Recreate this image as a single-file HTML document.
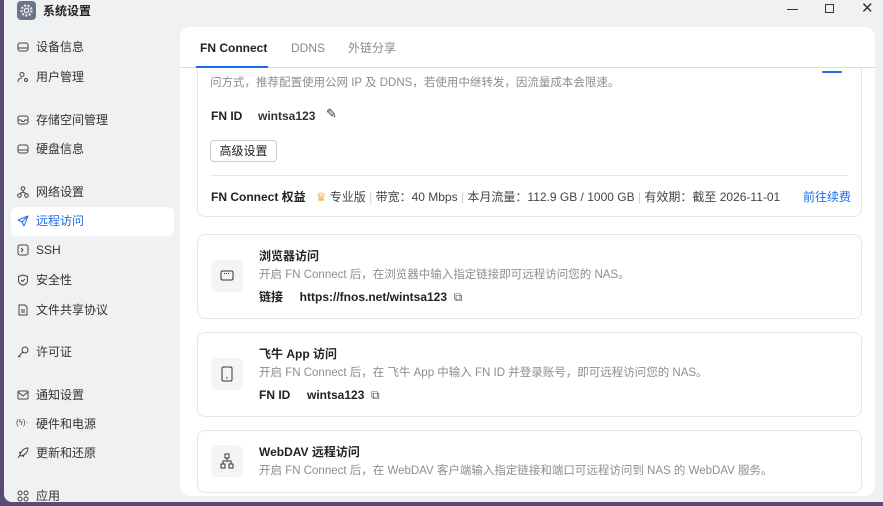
<!DOCTYPE html>
<html><head><meta charset="utf-8"><style>
*{margin:0;padding:0;box-sizing:border-box}
body{width:883px;height:506px;overflow:hidden;background:#5a4a78;font-family:"Liberation Sans","Noto Sans CJK SC",sans-serif;color:#222;position:relative}
.win{position:absolute;left:4px;top:0;width:879px;height:502px;background:#f0f1f3;border-bottom-left-radius:8px}
.abs{position:absolute;white-space:nowrap}
.nav{position:absolute;left:36px;font-size:12px;color:#333;line-height:14px}
.ni{position:absolute;left:17px;width:12px;height:12px}
.panel{position:absolute;left:180px;top:27px;width:695px;height:469px;background:#fff;border-radius:10px;overflow:hidden}
.scroll{position:absolute;left:0;top:41px;width:695px;height:428px;overflow:hidden}
.card{position:absolute;left:17px;width:665px;border:1px solid #e6e7ea;border-radius:8px;background:#fff}
.t{font-size:12px;line-height:14px}
.d{font-size:11.5px;color:#8a8d93;line-height:14px}
.b{font-weight:bold;color:#222}
.ib{position:absolute;left:13px;width:32px;height:32px;background:#f3f4f6;border-radius:6px}
</style></head><body>
<div class="win">
<div class="abs" style="left:13px;top:1px;width:19px;height:19px;background:#6c7588;border-radius:4px"><svg width="19" height="19" viewBox="0 0 19 19"><circle cx="9.5" cy="9.5" r="5" fill="none" stroke="#e8eaf0" stroke-width="2.2" stroke-dasharray="2 1.5"/><circle cx="9.5" cy="9.5" r="2.2" fill="none" stroke="#e8eaf0" stroke-width="1.4"/></svg></div>
<div class="abs" style="left:39px;top:2px;font-size:12px;font-weight:bold">系统设置</div>
<div class="abs" style="left:783px;top:9px;width:11px;height:1px;background:#333"></div>
<div class="abs" style="left:821px;top:4px;width:9px;height:9px;border:1.2px solid #333"></div>
<div class="abs" style="left:857px;top:-1px;font-size:15px;color:#333">✕</div>
</div>
<div class="abs" style="left:11px;top:207px;width:163px;height:29px;background:#fff;border-radius:6px"></div>
<svg class="ni" style="top:41px" viewBox="0 0 12 12"><rect x="1" y="2" width="10" height="8" rx="2" fill="none" stroke="#444"/><line x1="1" y1="7" x2="11" y2="7" stroke="#444"/></svg><div class="nav" style="top:40px">设备信息</div>
<svg class="ni" style="top:71px" viewBox="0 0 12 12"><circle cx="5" cy="3.5" r="2" fill="none" stroke="#444"/><path d="M1 11c0-3 2-4 4-4" fill="none" stroke="#444"/><circle cx="9" cy="9" r="1.5" fill="none" stroke="#444"/></svg><div class="nav" style="top:70px">用户管理</div>
<svg class="ni" style="top:114px" viewBox="0 0 12 12"><rect x="1" y="2" width="10" height="8" rx="2" fill="none" stroke="#444"/><path d="M1 6h3l1 1.5h2L8 6h3" fill="none" stroke="#444"/></svg><div class="nav" style="top:113px">存储空间管理</div>
<svg class="ni" style="top:143px" viewBox="0 0 12 12"><rect x="1" y="2" width="10" height="8" rx="2" fill="none" stroke="#444"/><line x1="1" y1="7" x2="11" y2="7" stroke="#444"/></svg><div class="nav" style="top:142px">硬盘信息</div>
<svg class="ni" style="top:186px" viewBox="0 0 12 12"><circle cx="6" cy="2.5" r="1.8" fill="none" stroke="#444"/><circle cx="2.5" cy="9.5" r="1.8" fill="none" stroke="#444"/><circle cx="9.5" cy="9.5" r="1.8" fill="none" stroke="#444"/><path d="M6 4.5v2M3 7.5L6 6l3 1.5" fill="none" stroke="#444"/></svg><div class="nav" style="top:185px">网络设置</div>
<svg class="ni" style="top:215px" viewBox="0 0 12 12"><path d="M11 1L1 5l4 2 2 4z M5 7l6-6" fill="none" stroke="#1a6cf0" stroke-linejoin="round"/></svg><div class="nav" style="top:214px;color:#1a6cf0">远程访问</div>
<svg class="ni" style="top:244px" viewBox="0 0 12 12"><rect x="1" y="1" width="10" height="10" rx="2" fill="none" stroke="#444"/><path d="M4 4l2 2-2 2" fill="none" stroke="#444"/></svg><div class="nav" style="top:243px">SSH</div>
<svg class="ni" style="top:274px" viewBox="0 0 12 12"><path d="M6 1l4.5 1.5v4c0 2.5-2 4-4.5 4.5C3.5 10.5 1.5 9 1.5 6.5v-4z M4 6l1.5 1.5L8 5" fill="none" stroke="#444"/></svg><div class="nav" style="top:273px">安全性</div>
<svg class="ni" style="top:304px" viewBox="0 0 12 12"><path d="M2 1h6l2 2v8H2z M4 6h4M4 8h4" fill="none" stroke="#444"/></svg><div class="nav" style="top:303px">文件共享协议</div>
<svg class="ni" style="top:346px" viewBox="0 0 12 12"><circle cx="8" cy="4" r="3" fill="none" stroke="#444"/><path d="M6 6l-5 5M2 10l1.5 1" fill="none" stroke="#444"/></svg><div class="nav" style="top:345px">许可证</div>
<svg class="ni" style="top:389px" viewBox="0 0 12 12"><rect x="1" y="2" width="10" height="8" rx="1" fill="none" stroke="#444"/><path d="M1 3l5 4 5-4" fill="none" stroke="#444"/></svg><div class="nav" style="top:388px">通知设置</div>
<div class="abs" style="left:16px;top:418px;font-size:8px;color:#444">(ϟ)·</div><div class="nav" style="top:417px">硬件和电源</div>
<svg class="ni" style="top:447px" viewBox="0 0 12 12"><path d="M11 1C7 1 4 4 3 8l1 1c4-1 7-4 7-8z M3 8l-2 3M2 6l2-1M6 10l1-2" fill="none" stroke="#444"/></svg><div class="nav" style="top:446px">更新和还原</div>
<svg class="ni" style="top:490px" viewBox="0 0 12 12"><circle cx="3" cy="3" r="2" fill="none" stroke="#444"/><circle cx="9" cy="3" r="2" fill="none" stroke="#444"/><circle cx="3" cy="9" r="2" fill="none" stroke="#444"/><circle cx="9" cy="9" r="2" fill="none" stroke="#444"/></svg><div class="nav" style="top:489px">应用</div>

<div class="panel">
<div class="abs t b" style="left:20px;top:14px">FN Connect</div>
<div class="abs t" style="left:111px;top:14px;color:#888">DDNS</div>
<div class="abs t" style="left:168px;top:14px;color:#888">外链分享</div>
<div class="abs" style="left:0;top:40px;width:695px;height:1px;background:#ddd"></div>
<div class="abs" style="left:16px;top:39px;width:72px;height:2px;background:#1a6cf0"></div>

<div class="scroll">
<div class="card" style="top:-22px;height:171px">
<div class="abs" style="left:624px;top:24px;width:20px;height:2px;background:#1a6cf0;border-radius:1px"></div>
<div class="abs d" style="left:12px;top:29px">问方式，推荐配置使用公网 IP 及 DDNS，若使用中继转发，因流量成本会限速。</div>
<div class="abs t b" style="left:13px;top:62px">FN ID</div>
<div class="abs t b" style="left:60px;top:62px;color:#333">wintsa123</div>
<div class="abs" style="left:128px;top:59px;font-size:13px;color:#333">✎</div>
<div class="abs t" style="left:12px;top:93px;width:67px;height:22px;border:1px solid #ccc;border-radius:4px;text-align:center;line-height:20px">高级设置</div>
<div class="abs" style="left:12px;top:128px;width:638px;height:1px;background:#e8e8ea"></div>
<div class="abs t" style="left:13px;top:143px;color:#444"><b style="color:#222">FN Connect 权益</b>&nbsp;&nbsp;&nbsp;<span style="color:#f2b84b">♛</span> 专业版 <span style="color:#ccc">|</span> 带宽：40 Mbps <span style="color:#ccc">|</span> 本月流量：112.9 GB / 1000 GB <span style="color:#ccc">|</span> 有效期：截至 2026-11-01</div>
<div class="abs t" style="left:605px;top:143px;color:#1a6cf0">前往续费</div>
</div>

<div class="card" style="top:166px;height:85px">
<div class="ib" style="top:25px"><svg width="32" height="32"><rect x="10" y="11" width="12" height="9" rx="1.5" fill="none" stroke="#333"/><path d="M13 13.5h6" stroke="#333" stroke-dasharray="1 1"/></svg></div>
<div class="abs t b" style="left:61px;top:14px">浏览器访问</div>
<div class="abs d" style="left:61px;top:33px">开启 FN Connect 后，在浏览器中输入指定链接即可远程访问您的 NAS。</div>
<div class="abs t b" style="left:61px;top:55px">链接&nbsp;&nbsp;&nbsp;&nbsp;&nbsp;https://fnos.net/wintsa123&nbsp;&nbsp;<span style="font-weight:normal;color:#555">⧉</span></div>
</div>

<div class="card" style="top:264px;height:85px">
<div class="ib" style="top:25px"><svg width="32" height="32"><rect x="11" y="9" width="10" height="14" rx="1.5" fill="none" stroke="#333"/><circle cx="16" cy="20" r=".7" fill="#333"/></svg></div>
<div class="abs t b" style="left:61px;top:14px">飞牛 App 访问</div>
<div class="abs d" style="left:61px;top:33px">开启 FN Connect 后，在 飞牛 App 中输入 FN ID 并登录账号，即可远程访问您的 NAS。</div>
<div class="abs t b" style="left:61px;top:55px">FN ID&nbsp;&nbsp;&nbsp;&nbsp;&nbsp;wintsa123&nbsp;&nbsp;<span style="font-weight:normal;color:#555">⧉</span></div>
</div>

<div class="card" style="top:362px;height:63px">
<div class="ib" style="top:14px"><svg width="32" height="32"><rect x="14" y="9" width="4" height="4" fill="none" stroke="#333"/><rect x="10" y="19" width="4" height="4" fill="none" stroke="#333"/><rect x="18" y="19" width="4" height="4" fill="none" stroke="#333"/><path d="M16 13v3M12 19v-3h8v3" fill="none" stroke="#333"/></svg></div>
<div class="abs t b" style="left:61px;top:14px">WebDAV 远程访问</div>
<div class="abs d" style="left:61px;top:33px">开启 FN Connect 后，在 WebDAV 客户端输入指定链接和端口可远程访问到 NAS 的 WebDAV 服务。</div>
</div>
</div>
</div>
</body></html>
